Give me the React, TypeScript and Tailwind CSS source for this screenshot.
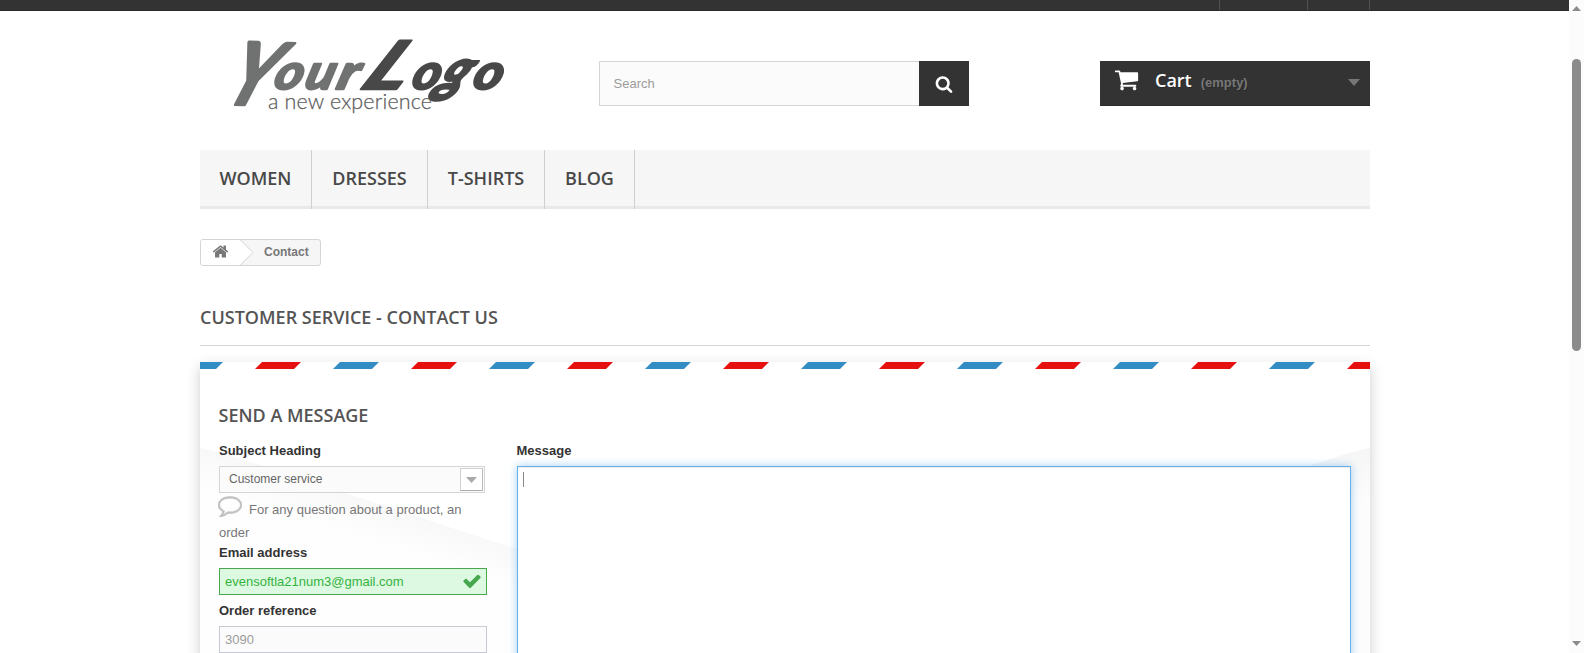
import React from 'react';

type IconProps = { d: string; className?: string };

function Glyph({ d, className }: IconProps) {
  return (
    <svg viewBox="0 0 1792 1792" fill="currentColor" className={className} aria-hidden="true">
      <path d={d} />
    </svg>
  );
}

const icons = {
  search:
    'M1216 832q0-185-131.5-316.5t-316.5-131.5-316.5 131.5-131.5 316.5 131.5 316.5 316.5 131.5 316.5-131.5 131.5-316.5zm512 832q0 52-38 90t-90 38q-54 0-90-38l-343-342q-179 124-399 124-143 0-273.5-55.5t-225-150-150-225-55.5-273.5 55.5-273.5 150-225 225-150 273.5-55.5 273.5 55.5 225 150 150 225 55.5 273.5q0 220-124 399l343 343q37 37 37 90z',
  home: 'M1472 992v480q0 26-19 45t-45 19h-384v-384h-256v384h-384q-26 0-45-19t-19-45v-480q0-1 .5-3t.5-3l575-474 575 474q1 2 1 6zm223-69l-62 74q-8 9-21 11h-3q-13 0-21-7l-692-577-692 577q-12 8-24 7-13-2-21-11l-62-74q-8-10-7-23.5t11-21.5l719-599q32-26 76-26t76 26l244 204v-195q0-14 9-23t23-9h192q14 0 23 9t9 23v408l219 182q10 8 11 21.5t-7 23.5z',
  cart: 'M704 1536q0 52-38 90t-90 38-90-38-38-90 38-90 90-38 90 38 38 90zm896 0q0 52-38 90t-90 38-90-38-38-90 38-90 90-38 90 38 38 90zm128-1088v512q0 24-16.5 42.5t-40.5 21.5l-1044 122q13 60 13 70 0 16-24 64h920q26 0 45 19t19 45-19 45-45 19h-1024q-26 0-45-19t-19-45q0-11 8-31.5t16-36 21.5-40 15.5-29.5l-177-823h-204q-26 0-45-19t-19-45 19-45 45-19h256q16 0 28.5 6.5t19.5 15.5 13 24.5 8 26 5.5 29.5 4.5 26h1201q26 0 45 19t19 45z',
  comment:
    'M896 384q-204 0-381.5 69.5t-282 187.5-104.5 255q0 112 71.5 213.5t201.5 175.5l87 50-27 96q-24 91-70 172 152-63 275-171l43-38 57 6q69 8 130 8 204 0 381.5-69.5t282-187.5 104.5-255-104.5-255-282-187.5-381.5-69.5zm896 512q0 174-120 321.5t-326 233-450 85.5q-70 0-145-8-198 175-460 242-49 14-114 22h-5q-15 0-27-10.5t-16-27.5v-1q-3-4-.5-12t2-10 4.5-9.5l6-9 7-8.5 8-9q7-8 31-34.5t34.5-38 31-39.5 32.5-51 27-59 26-76q-157-89-247.5-220t-90.5-281q0-130 71-248.5t191-204.5 286-136.5 348-50.5 348 50.5 286 136.5 191 204.5 71 248.5z',
  check:
    'M1671 566q0 40-28 68l-724 724-136 136q-28 28-68 28t-68-28l-136-136-362-362q-28-28-28-68t28-68l136-136q28-28 68-28t68 28l294 295 656-657q28-28 68-28t68 28l136 136q28 28 28 68z',
};

const openSans = "font-['Open_Sans',sans-serif]";

function Logo() {
  return (
    <svg width="320" height="125" viewBox="210 11 320 125" className="ml-[10px] block shrink-0">
      <g
        fontFamily="Lato, sans-serif"
        fontStyle="italic"
        fontWeight="700"
        strokeLinejoin="round"
        strokeLinecap="round"
        strokeWidth="2.4"
      >
        <g fill="#707271" stroke="#707271">
          <text transform="translate(220 104) rotate(2) skewX(-20) scale(1.02 1.18)" fontSize="74">Y</text>
          <text transform="translate(272 89) skewX(-16) scale(1.1 1)" fontSize="49">o</text>
          <text transform="translate(303 89) skewX(-16) scale(1.08 1)" fontSize="49">u</text>
          <text transform="translate(335 89) skewX(-16) scale(1.2 1)" fontSize="49">r</text>
        </g>
        <g fill="#484848" stroke="#484848">
          <text transform="translate(358 89) skewX(-32) scale(1.32 1)" fontSize="67">L</text>
          <text transform="translate(410 89) skewX(-16) scale(1.08 1)" fontSize="49">o</text>
          <text transform="translate(434 90) skewX(-30) scale(1.14 1.2)" fontSize="48">g</text>
          <text transform="translate(471 89) skewX(-16) scale(1.12 1)" fontSize="49">o</text>
        </g>
      </g>
      <text
        x="268"
        y="109"
        fontFamily="Lato, sans-serif"
        fontWeight="300"
        fontSize="21.5"
        fill="#5c5c5c"
        stroke="#5c5c5c"
        strokeWidth=".25"
        textLength="164"
      >
        a new experience
      </text>
    </svg>
  );
}

function Header() {
  return (
    <header className="flex h-[139px] items-start">
      <Logo />
      <form className="ml-[69px] mt-[50px] flex h-[45px] w-[370px]" onSubmit={(e) => e.preventDefault()}>
        <div className="flex flex-1 items-center border border-r-0 border-[#d6d4d4] bg-[#fbfbfb] pl-[13.5px] text-[13px] text-[#9c9b9b]">
          Search
        </div>
        <button className="flex w-[50px] items-center justify-center bg-[#333] text-white">
          <Glyph d={icons.search} className="size-[18px]" />
        </button>
      </form>
      <div className="ml-[131px] mt-[50px] flex h-[45px] w-[270px] border-b border-[#2d2a2a] bg-[#333]">
        <Glyph d={icons.cart} className="ml-[14px] mt-[6px] size-[25px] text-white" />
        <span className={`${openSans} ml-[16px] mt-[7px] text-[18px] font-semibold leading-[25px] text-white [text-shadow:1px_1px_rgba(0,0,0,.2)]`}>
          Cart
        </span>
        <span className="ml-[9px] mt-[12px] text-[13px] font-bold leading-[20px] text-[#777] [text-shadow:1px_1px_rgba(0,0,0,.2)]">
          (empty)
        </span>
        <svg width="12" height="7" viewBox="0 0 12 7" className="ml-auto mr-[10px] mt-[18px]">
          <path d="M0 0h12L6 7z" fill="#777" />
        </svg>
      </div>
    </header>
  );
}

function Nav() {
  const item = 'flex h-[59px] justify-center border-r border-[#d0d0d0] pt-[16px]';
  return (
    <nav
      className={`${openSans} flex h-[59px] bg-[#f6f6f6] text-[18px] font-semibold leading-[24px] text-[#484848] [box-shadow:inset_0_-3px_0_#e9e9e9]`}
    >
      <a className={`${item} w-[112px]`}>WOMEN</a>
      <a className={`${item} w-[116px]`}>DRESSES</a>
      <a className={`${item} w-[117px]`}>T-SHIRTS</a>
      <a className={`${item} w-[90px]`}>BLOG</a>
    </nav>
  );
}

function Breadcrumb() {
  return (
    <div className="mt-[30px] flex h-[27px] w-[121px] overflow-hidden rounded-[3px] border border-[#d6d4d4] bg-[#f6f6f6] text-[12px] font-bold text-[#777]">
      <div className="flex w-[39px] items-center bg-white pl-[11px]">
        <Glyph d={icons.home} className="-mt-[3px] size-[17px]" />
      </div>
      <svg width="14" height="25" viewBox="0 0 14 25" className="shrink-0">
        <path d="M0 0L13 12.5L0 25z" fill="#fff" />
        <path d="M.5 0L13 12.5L.5 25" fill="none" stroke="#d6d4d4" />
      </svg>
      <span className="ml-[10px] leading-[24px]">Contact</span>
    </div>
  );
}

function AirmailEdge() {
  return (
    <svg width="1170" height="7" className="block">
      <defs>
        <pattern id="airmail" width="156" height="7" x="-23" patternUnits="userSpaceOnUse">
          <path d="M7 0H46L39 7H0z" fill="#338cc4" />
          <path d="M85 0H124L117 7H78z" fill="#e6100f" />
        </pattern>
      </defs>
      <rect width="1170" height="7" fill="url(#airmail)" />
    </svg>
  );
}

function EnvelopeFold() {
  return (
    <svg width="1170" height="291" viewBox="0 0 1170 291" className="absolute left-0 top-0">
      <defs>
        <linearGradient id="foldLeft" gradientUnits="userSpaceOnUse" x1="170" y1="137" x2="158" y2="175">
          <stop offset="0" stopColor="#f8f8f8" />
          <stop offset="1" stopColor="#fefefe" />
        </linearGradient>
        <linearGradient id="foldRight" gradientUnits="userSpaceOnUse" x1="1112" y1="104" x2="1126" y2="150">
          <stop offset="0" stopColor="#f6f6f6" />
          <stop offset="1" stopColor="#fcfcfc" />
        </linearGradient>
      </defs>
      <path d="M0 86Q10 87 60 103Q190 146 317 187L400 212V291H0z" fill="url(#foldLeft)" />
      <path d="M1170 86Q1160 87 1112 103Q980 146 853 187L770 212V291H1170z" fill="url(#foldRight)" />
    </svg>
  );
}

function ContactForm() {
  const label = 'text-[13px] font-bold leading-[18px] text-[#333]';
  return (
    <section className="relative mt-4 h-[320px] bg-white [box-shadow:0_5px_13px_rgba(0,0,0,.2)]">
      <EnvelopeFold />
      <div className="relative">
        <AirmailEdge />
        <h3 className={`${openSans} ml-[18.5px] mt-[34px] text-[18px] font-semibold leading-[24px] text-[#555454]`}>
          SEND A MESSAGE
        </h3>
        <div className="flex pl-[19px] pt-[15px]">
          <div className="w-[298px]">
            <div className={label}>Subject Heading</div>
            <div className="mt-[6px] flex h-[27px] w-[266px] items-start border border-[#d6d4d4] bg-[#fbfbfb] pl-[9px] text-[12px] leading-[24px] text-[#666]">
              Customer service
              <span className="ml-auto mr-px mt-px flex h-[23px] w-[23px] items-center justify-center border border-[#d0d0d0] border-b-[#aaa] border-r-[#bbb] bg-white">
                <svg width="11" height="6" viewBox="0 0 11 6">
                  <path d="M0 0h11L5.5 6z" fill="#aaa" />
                </svg>
              </span>
            </div>
            <p className="h-[50px] w-[266px] text-[13px] leading-[23px] text-[#777]">
              <Glyph
                d={icons.comment}
                className="-ml-px mr-[7px] inline-block size-[24px] stroke-[#c0c0c0] stroke-[40px] align-[-3px] text-[#c0c0c0]"
              />
              For any question about a product, an order
            </p>
            <div className={`${label} mt-px`}>Email address</div>
            <div className="mt-[6px] flex h-[27px] w-[268px] items-center border border-[#46a74e] bg-[#ddf9e1] pl-[5px] text-[13px] text-[#35b33f]">
              evensoftla21num3@gmail.com
              <Glyph d={icons.check} className="-mt-px ml-auto mr-[4px] size-[20px] text-[#46a74e]" />
            </div>
            <div className={`${label} mt-[7px]`}>Order reference</div>
            <div className="mt-[6px] flex h-[27px] w-[268px] items-center border border-[#c7cad2] bg-[#fbfbfb] pl-[5px] text-[13px] text-[#9c9b9b]">
              3090
            </div>
          </div>
          <div>
            <div className={`${label} -ml-[0.5px]`}>Message</div>
            <div className="mt-[6px] h-[220px] w-[834px] border border-[#66afe9] bg-white pl-[5px] pt-[5px] [box-shadow:inset_0_1px_1px_rgba(0,0,0,.075),0_0_8px_rgba(102,175,233,.6)]">
              <div className="h-[15px] w-px bg-[#888]" />
            </div>
          </div>
        </div>
      </div>
    </section>
  );
}

function Scrollbar() {
  return (
    <div className="flex h-[653px] w-[15px] flex-col items-center bg-[#fcfcfc]">
      <svg width="9" height="5" viewBox="0 0 9 5" className="mt-[6px] shrink-0">
        <path d="M4.5 0L9 5H0z" fill="#8b8b8b" />
      </svg>
      <div className="mt-[48px] h-[292px] w-[9px] shrink-0 rounded-full bg-[#8b8b8b]" />
      <svg width="9" height="5" viewBox="0 0 9 5" className="mb-[7px] mt-auto shrink-0">
        <path d="M0 0H9L4.5 5z" fill="#8b8b8b" />
      </svg>
    </div>
  );
}

export default function App() {
  return (
    <div className="flex h-[653px] w-[1584px] overflow-hidden bg-white font-['Liberation_Sans',Arial,sans-serif]">
      <div className="h-[653px] w-[1569px] overflow-hidden">
        <div className="h-[11px] border-b border-[#2b2b2b] bg-[#333]">
          <div className="ml-[200px] flex h-[10px] w-[1170px] justify-end">
            <div className="w-[88px] border-l border-[#515151]" />
            <div className="w-[63px] border-l border-r border-[#515151]" />
          </div>
        </div>
        <main className="ml-[200px] w-[1170px]">
          <Header />
          <Nav />
          <Breadcrumb />
          <h1
            className={`${openSans} mt-[39px] h-[41px] border-b border-[#d6d4d4] text-[18px] font-semibold leading-[24px] text-[#555454]`}
          >
            CUSTOMER SERVICE - CONTACT US
          </h1>
          <ContactForm />
        </main>
      </div>
      <Scrollbar />
    </div>
  );
}
